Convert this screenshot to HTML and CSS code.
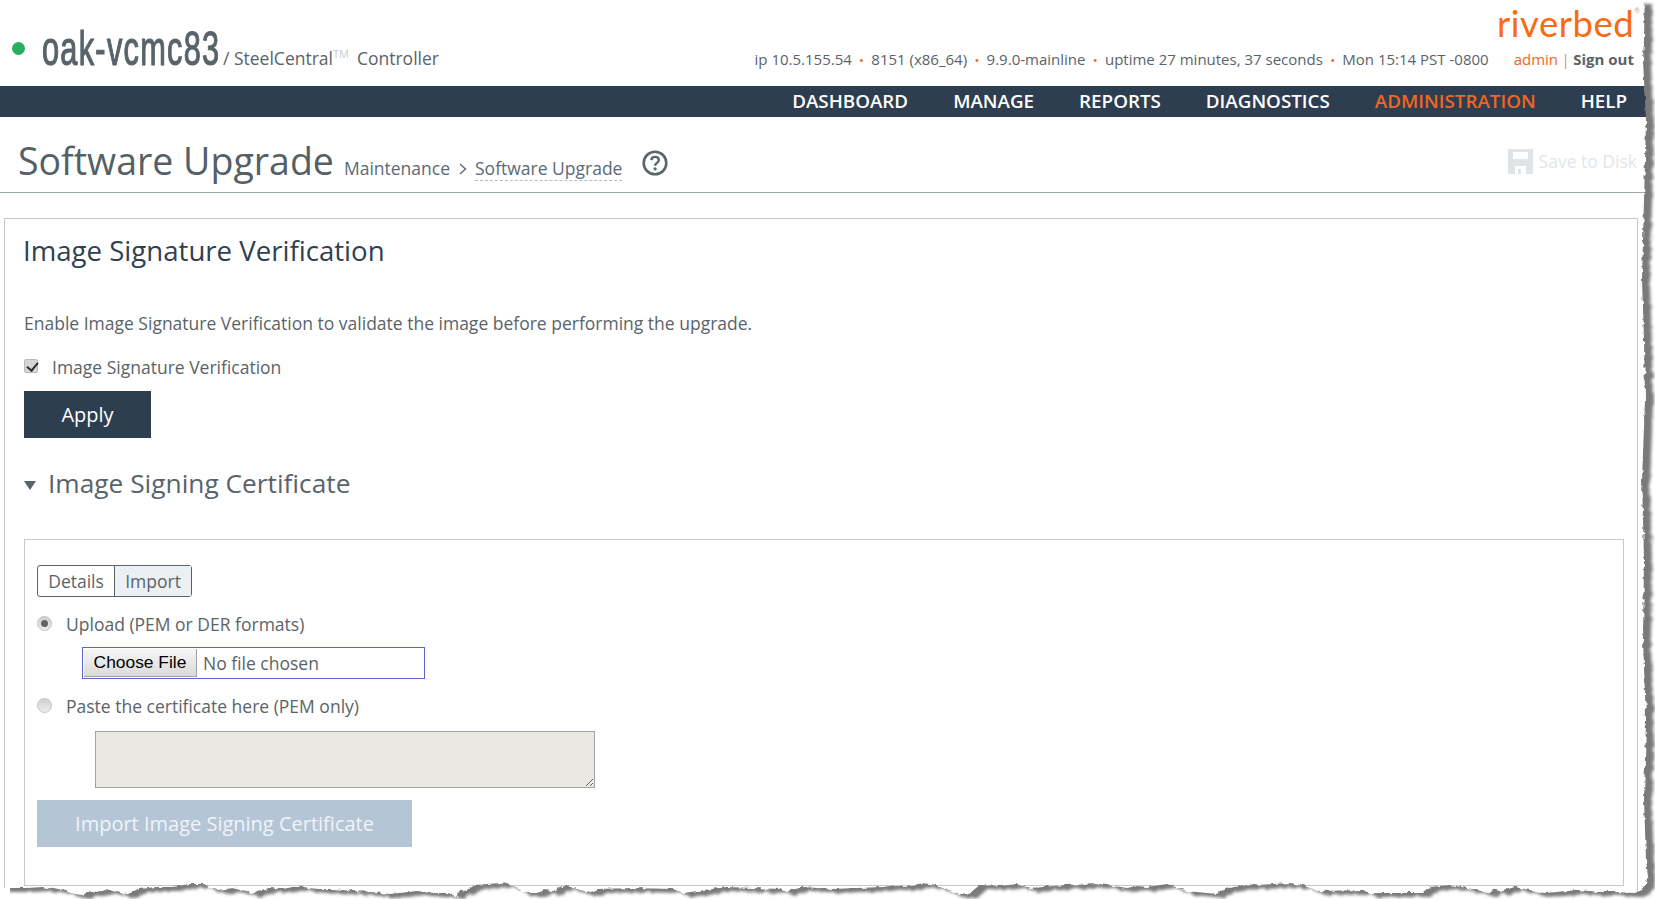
FILE: index.html
```html
<!DOCTYPE html>
<html lang="en">
<head>
<meta charset="utf-8">
<title>Software Upgrade</title>
<link rel="stylesheet" href="styles.css">
</head>
<body>
<div class="page">
  <header class="top">
    <div class="identity">
      <span class="status-dot"></span>
      <span class="hostname">oak-vcmc83</span>
      <span class="product">/ SteelCentral<sup class="tm">TM</sup></span>
      <span class="product-kind">Controller</span>
    </div>
    <div class="top-right">
      <div class="logo">riverbed<sup class="reg">®</sup></div>
      <div class="status">
        <span>ip 10.5.155.54</span><i class="sep">•</i>
        <span>8151 (x86_64)</span><i class="sep">•</i>
        <span>9.9.0-mainline</span><i class="sep">•</i>
        <span>uptime 27 minutes, 37 seconds</span><i class="sep">•</i>
        <span>Mon 15:14 PST -0800</span>
        <span class="user">admin</span>
        <span class="bar">|</span>
        <b class="signout">Sign out</b>
      </div>
    </div>
  </header>

  <nav class="nav">
    <a>DASHBOARD</a>
    <a>MANAGE</a>
    <a>REPORTS</a>
    <a>DIAGNOSTICS</a>
    <a class="active">ADMINISTRATION</a>
    <a>HELP</a>
  </nav>

  <div class="titlebar">
    <h1>Software Upgrade</h1>
    <span class="crumb">Maintenance</span>
    <svg class="chev" width="8" height="12" viewBox="0 0 8 12"><path d="M1 1l5.500 5-5.500 5" fill="none" stroke="#58636b" stroke-width="1.300"/></svg>
    <span class="crumb current">Software Upgrade</span>
    <svg class="help" width="26" height="26" viewBox="0 0 26 26">
      <circle cx="13" cy="13" r="11.300" fill="none" stroke="#5b6468" stroke-width="2.600"/>
      <path d="M9.300 10.200c.2-2.200 1.700-3.300 3.800-3.300s3.700 1.200 3.700 3.100c0 2.900-3.600 2.800-3.700 5.700" fill="none" stroke="#5b6468" stroke-width="2.400"/>
      <circle cx="13.100" cy="18.800" r="1.600" fill="#5b6468"/>
    </svg>
    <div class="save">
      <svg width="25" height="25" viewBox="0 0 25 25"><path d="M0 0h25v25H18v-8H7v8H0z M5 3v7h15V3z" fill="#e1e4e7" fill-rule="evenodd"/><rect x="10" y="20" width="3" height="5" fill="#e1e4e7"/></svg>
      <span>Save to Disk</span>
    </div>
  </div>

  <main class="panel">
    <h2>Image Signature Verification</h2>
    <p class="intro">Enable Image Signature Verification to validate the image before performing the upgrade.</p>
    <label class="check-row"><input class="check" type="checkbox" checked>Image Signature Verification</label>
    <button class="btn primary" type="button">Apply</button>
    <h3><span class="caret"></span>Image Signing Certificate</h3>

    <section class="cert-box">
      <div class="tabs">
        <span class="tab">Details</span>
        <span class="tab selected">Import</span>
      </div>
      <label class="radio-row first"><input class="radio" type="radio" name="src" checked>Upload (PEM or DER formats)</label>
      <div class="file">
        <span class="file-btn">Choose File</span>
        <span class="file-name">No file chosen</span>
      </div>
      <label class="radio-row"><input class="radio" type="radio" name="src">Paste the certificate here (PEM only)</label>
      <textarea class="cert-text" disabled></textarea>
      <button class="btn disabled" type="button">Import Image Signing Certificate</button>
    </section>
  </main>

  <svg class="torn" width="1655" height="899" viewBox="0 0 1655 899" aria-hidden="true">
    <defs>
      <filter id="tear" filterUnits="userSpaceOnUse" x="0" y="0" width="1655" height="899" color-interpolation-filters="sRGB">
        <feTurbulence type="fractalNoise" baseFrequency="0.16" numOctaves="2" seed="7" result="noise"/>
        <feDisplacementMap in="SourceGraphic" in2="noise" scale="5" xChannelSelector="R" yChannelSelector="G" result="paper"/>
        <feOffset in="paper" dx="8" dy="4" result="off"/>
        <feGaussianBlur in="off" stdDeviation="1.400" result="blur"/>
        <feFlood flood-color="#7a7a7a" result="grey"/>
        <feComposite in="grey" in2="blur" operator="in" result="shadow"/>
        <feFlood flood-color="#ffffff" result="white"/>
        <feMerge result="back"><feMergeNode in="white"/><feMergeNode in="shadow"/></feMerge>
        <feComposite in="back" in2="paper" operator="out"/>
      </filter>
    </defs>
    <path filter="url(#tear)" fill="#000" d="M-20 -20L1645 -20L1644 40L1643 60L1646 120L1644 200L1642 280L1644 340L1645 400L1642 480L1644 560L1643 640L1646 720L1644 800L1646 860L1648 877L1642 890L1635 893L1615 892L1598 892L1578 890L1545 893L1535 891L1515 887L1500 891L1493 889L1487 893L1473 889L1450 885L1430 887L1423 893L1367 893L1360 890L1320 891L1307 887L1290 883L1273 884L1233 887L1223 890L1217 894L1187 891L1167 884L1147 887L1137 886L1127 888L1100 884L1067 885L1030 888L1017 884L1000 886L980 885L967 895L947 891L937 885L923 883L907 887L897 885L883 887L833 889L803 887L787 891L780 889L727 887L683 893L673 889L633 888L597 889L590 892L580 890L567 885L553 891L543 890L537 893L527 893L513 886L507 883L500 884L473 886L462 891L455 896L448 893L433 893L417 891L390 894L373 892L353 891L333 889L317 889L297 886L283 889L270 888L250 893L233 888L217 890L210 888L203 884L190 884L173 887L157 887L140 889L128 894L120 893L107 889L97 893L88 891L83 895L75 894L65 891L53 889L43 887L27 888L10 888L-20 888Z"/>
    <rect class="torn-cover" x="0" y="888" width="10" height="11"/>
  </svg>
</div>
</body>
</html>
```

FILE: styles.css
```css
* { box-sizing: border-box; }
html, body { margin: 0; padding: 0; background: #fff; }
body { font-family: "Open Sans", "Noto Sans", sans-serif; color: #5a6369; }
.page { position: relative; width: 1655px; height: 899px; overflow: hidden; background: #fff; }

.top { height: 86px; display: flex; justify-content: space-between; }
.identity { display: flex; align-items: baseline; padding: 24px 0 0 12px; height: 86px; }
.status-dot { width: 13px; height: 13px; border-radius: 50%; background: #27ae60; margin-right: 17px; align-self: flex-start; margin-top: 18px; }
.hostname { display: block; width: 181px; white-space: nowrap; font-family: "Liberation Sans", sans-serif; font-size: 48px; line-height: 50px; letter-spacing: 2px; color: #58636a; transform: scaleX(.64); transform-origin: left center; -webkit-text-stroke: 1.200px #58636a; }
.product { font-size: 17.500px; line-height: 24px; }
.tm { font-size: 11px; color: #c7ccd0; vertical-align: 7px; line-height: 0; }
.product-kind { font-size: 17.500px; line-height: 24px; margin-left: 8px; }

.top-right { display: flex; flex-direction: column; align-items: flex-end; padding-right: 21px; }
.logo { font-family: "Lato", "Open Sans", sans-serif; font-size: 36.500px; line-height: 46px; letter-spacing: .500px; color: #f76c13; margin-right: -6px; }
.reg { font-size: 7px; vertical-align: 24px; line-height: 0; color: #e0a070; letter-spacing: 0; }
.status { display: flex; align-items: baseline; font-size: 15px; line-height: 22px; margin-top: 2px; white-space: nowrap; }
.sep { font-style: normal; color: #f26522; font-size: 13px; width: 19.500px; text-align: center; }
.user { color: #f26522; margin-left: 25px; }
.bar { margin: 0 3.500px; color: #d59a65; }
.signout { font-weight: 700; color: #5a6369; }

.nav { height: 31px; background: #2d3e50; display: flex; justify-content: flex-end; align-items: center; gap: 45px; padding: 0 28px 0 0; }
.nav a { color: #fff; font-size: 18.800px; line-height: 31px; font-weight: 600; }
.nav a.active { color: #f26522; }

.titlebar { height: 76px; border-bottom: 1px solid #9aa9aa; display: flex; align-items: baseline; padding: 18px 18px 0 18px; position: relative; }
h1 { margin: 0; font-size: 37.500px; line-height: 52px; font-weight: 400; color: #555f65; }
.crumb { font-size: 17.500px; line-height: 24px; margin-left: 10px; color: #5a6a78; }
.crumb.current { margin-left: 8px; border-bottom: 1px dashed #bcbcbc; line-height: 23px; }
.chev { margin-left: 9px; margin-right: 0; align-self: flex-end; margin-bottom: 17px; }
.help { margin-left: 20px; align-self: flex-start; margin-top: 15px; }
.save { margin-left: auto; display: flex; align-items: center; gap: 6px; color: #e3e6e8; font-size: 17.500px; line-height: 25px; align-self: flex-start; margin-top: 14px; }

.panel { margin: 25px 0 0 4px; width: 1634px; height: 700px; border: 1px solid #c3c9ce; padding: 0 14px 0 19px; }
h2 { margin: 0 0 0 -1px; padding-top: 12px; font-size: 27.600px; line-height: 38px; font-weight: 400; color: #2f4051; }
.intro { margin: 42px 0 0; font-size: 17.500px; line-height: 24px; }
.check-row { display: flex; align-items: center; height: 24px; margin-top: 20px; font-size: 17.500px; }
.check { appearance: none; width: 14px; height: 14px; margin: -2px 14px 0 0; border: 1px solid #bbb; border-radius: 2px; background: #d6d6d6; position: relative; }
.check::after { content: ""; position: absolute; left: 4px; top: 0; width: 5px; height: 9px; border: solid #2b2b2b; border-width: 0 2.500px 2.500px 0; transform: rotate(40deg); }
.btn { display: block; border: 0; font-family: inherit; color: #fff; font-size: 20px; height: 47px; padding: 0; }
.btn.primary { width: 127px; margin-top: 12px; background: #2d3e50; }
.btn.disabled { width: 375px; margin-top: 12px; background: #b4c5d6; color: #f0f4f8; }
h3 { margin: 25px 0 0; font-size: 26.300px; line-height: 40px; font-weight: 400; color: #58636a; display: flex; align-items: center; }
.caret { width: 0; height: 0; border-left: 6px solid transparent; border-right: 6px solid transparent; border-top: 9px solid #58636a; margin: 5px 12px 0 0; }

.cert-box { margin-top: 36px; width: 1600px; height: 347px; border: 1px solid #c3c9ce; padding: 25px 12px 0; }
.tabs { display: inline-flex; height: 32px; border: 1px solid #5a6369; border-radius: 3px; font-size: 17.500px; line-height: 30px; vertical-align: top; }
.tab { display: block; padding: 0 10.200px; }
.tab.selected { border-left: 1px solid #5a6369; background: #ecf0f3; }
.radio-row { display: flex; align-items: center; height: 24px; font-size: 17.500px; margin-top: 15px; }
.radio-row.first { margin-top: 15px; }
.radio { appearance: none; width: 15px; height: 15px; margin: -2px 14px 0 0; border-radius: 50%; border: 1px solid #c2c2c2; background: linear-gradient(#cfcfcf, #ececec); position: relative; }
.radio:checked::after { content: ""; position: absolute; left: 3px; top: 3px; width: 7px; height: 7px; border-radius: 50%; background: #636363; }
.file { display: flex; align-items: center; width: 343px; height: 32px; margin: 11px 0 0 45px; border: 1px solid #5a64c8; padding: 1px; }
.file-btn { display: flex; align-items: center; justify-content: center; width: 113px; height: 28px; background: linear-gradient(#f6f6f6, #dadada); border-right: 1px solid #a0a0a0; border-bottom: 1px solid #a0a0a0; font-family: "Liberation Sans", sans-serif; font-size: 17.400px; color: #000; }
.file-name { margin-left: 6px; font-size: 17.500px; }
.cert-text { display: block; width: 500px; height: 57px; margin: 13px 0 0 58px; background: #e9e9e2; border: 1px solid #a2a2a2; }
.torn { position: absolute; left: 0; top: 0; pointer-events: none; }
.torn-cover { fill: #fff; }
```
